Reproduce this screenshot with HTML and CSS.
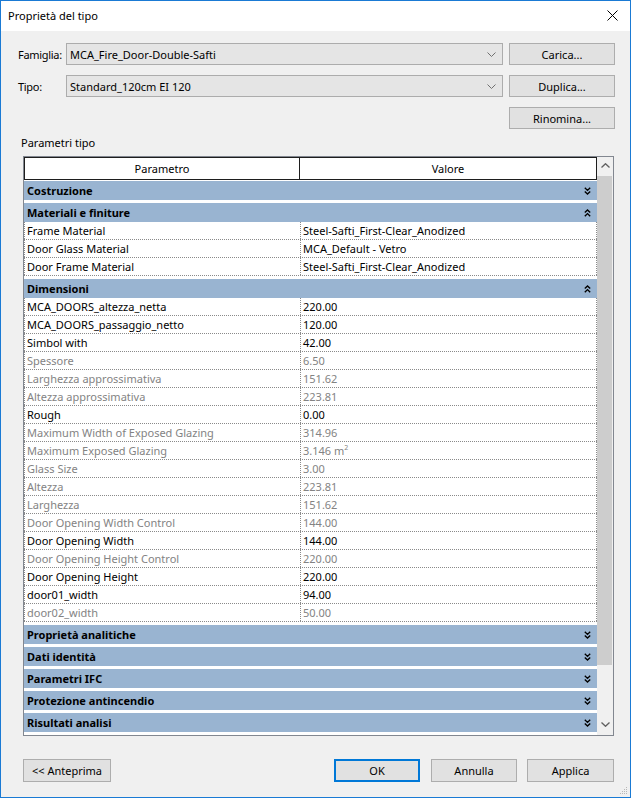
FILE: index.html
```html
<!DOCTYPE html>
<html lang="it">
<head>
<meta charset="utf-8">
<title>Proprietà del tipo</title>
<link rel="stylesheet" href="styles.css">
</head>
<body>
<svg class="defs" width="0" height="0" aria-hidden="true">
  <defs>
    <symbol id="dd" viewBox="0 0 7 8"><path d="M0.8 0.8 L3.5 3.4 L6.2 0.8 M0.8 4.4 L3.5 7 L6.2 4.4" fill="none" stroke="#000" stroke-width="1.4"/></symbol>
    <symbol id="du" viewBox="0 0 7 8"><path d="M0.8 3.6 L3.5 1 L6.2 3.6 M0.8 7.2 L3.5 4.6 L6.2 7.2" fill="none" stroke="#000" stroke-width="1.4"/></symbol>
  </defs>
</svg>
<div class="window">
  <div class="titlebar">
    <span class="title">Proprietà del tipo</span>
    <svg class="close" width="11" height="11" viewBox="0 0 11 11"><path d="M0.5 0.5 L10.5 10.5 M10.5 0.5 L0.5 10.5" stroke="#000" stroke-width="1"/></svg>
  </div>
  <div class="body">
    <div class="top-grid">
      <span class="lbl">Famiglia:</span>
      <div class="combo"><span>MCA_Fire_Door-Double-Safti</span><svg width="9" height="5" viewBox="0 0 9 5"><path d="M0.5 0.5 L4.5 4.5 L8.5 0.5" fill="none" stroke="#707070"/></svg></div>
      <button class="btn">Carica...</button>
      <span class="lbl">Tipo:</span>
      <div class="combo"><span>Standard_120cm EI 120</span><svg width="9" height="5" viewBox="0 0 9 5"><path d="M0.5 0.5 L4.5 4.5 L8.5 0.5" fill="none" stroke="#707070"/></svg></div>
      <button class="btn">Duplica...</button>
      <button class="btn col3">Rinomina...</button>
    </div>
    <div class="group-label">Parametri tipo</div>
    <div class="frame">
      <div class="table">
        <div class="thead"><div class="th th1">Parametro</div><div class="th">Valore</div></div>

        <div class="band first"><span>Costruzione</span><svg class="chev"><use href="#dd"/></svg></div>
        <div class="band"><span>Materiali e finiture</span><svg class="chev"><use href="#du"/></svg></div>
        <div class="row"><div class="c1">Frame Material</div><div class="c2">Steel-Safti_First-Clear_Anodized</div></div>
        <div class="row"><div class="c1">Door Glass Material</div><div class="c2">MCA_Default - Vetro</div></div>
        <div class="row"><div class="c1">Door Frame Material</div><div class="c2">Steel-Safti_First-Clear_Anodized</div></div>

        <div class="band"><span>Dimensioni</span><svg class="chev"><use href="#du"/></svg></div>
        <div class="row"><div class="c1">MCA_DOORS_altezza_netta</div><div class="c2">220.00</div></div>
        <div class="row"><div class="c1">MCA_DOORS_passaggio_netto</div><div class="c2">120.00</div></div>
        <div class="row"><div class="c1">Simbol with</div><div class="c2">42.00</div></div>
        <div class="row ro"><div class="c1">Spessore</div><div class="c2">6.50</div></div>
        <div class="row ro"><div class="c1">Larghezza approssimativa</div><div class="c2">151.62</div></div>
        <div class="row ro"><div class="c1">Altezza approssimativa</div><div class="c2">223.81</div></div>
        <div class="row"><div class="c1">Rough</div><div class="c2">0.00</div></div>
        <div class="row ro"><div class="c1">Maximum Width of Exposed Glazing</div><div class="c2">314.96</div></div>
        <div class="row ro"><div class="c1">Maximum Exposed Glazing</div><div class="c2">3.146 m<sup class="sup">2</sup></div></div>
        <div class="row ro"><div class="c1">Glass Size</div><div class="c2">3.00</div></div>
        <div class="row ro"><div class="c1">Altezza</div><div class="c2">223.81</div></div>
        <div class="row ro"><div class="c1">Larghezza</div><div class="c2">151.62</div></div>
        <div class="row ro"><div class="c1">Door Opening Width Control</div><div class="c2">144.00</div></div>
        <div class="row"><div class="c1">Door Opening Width</div><div class="c2">144.00</div></div>
        <div class="row ro"><div class="c1">Door Opening Height Control</div><div class="c2">220.00</div></div>
        <div class="row"><div class="c1">Door Opening Height</div><div class="c2">220.00</div></div>
        <div class="row"><div class="c1">door01_width</div><div class="c2">94.00</div></div>
        <div class="row ro"><div class="c1">door02_width</div><div class="c2">50.00</div></div>

        <div class="band"><span>Proprietà analitiche</span><svg class="chev"><use href="#dd"/></svg></div>
        <div class="band"><span>Dati identità</span><svg class="chev"><use href="#dd"/></svg></div>
        <div class="band"><span>Parametri IFC</span><svg class="chev"><use href="#dd"/></svg></div>
        <div class="band"><span>Protezione antincendio</span><svg class="chev"><use href="#dd"/></svg></div>
        <div class="band"><span>Risultati analisi</span><svg class="chev"><use href="#dd"/></svg></div>
      </div>
      <div class="scrollbar">
        <div class="arrow"><svg width="9" height="5" viewBox="0 0 9 5"><path d="M0.5 4.5 L4.5 0.7 L8.5 4.5" fill="none" stroke="#606060" stroke-width="1.3"/></svg></div>
        <div class="thumb"></div>
        <div class="spacer"></div>
        <div class="arrow"><svg width="9" height="5" viewBox="0 0 9 5"><path d="M0.5 0.5 L4.5 4.3 L8.5 0.5" fill="none" stroke="#606060" stroke-width="1.3"/></svg></div>
      </div>
    </div>
    <div class="footer">
      <button class="btn fbtn prev">&lt;&lt; Anteprima</button>
      <div class="fspacer"></div>
      <button class="btn fbtn ok">OK</button>
      <button class="btn fbtn">Annulla</button>
      <button class="btn fbtn apply">Applica</button>
    </div>
  </div>
  <svg class="grip" width="8" height="8" viewBox="0 0 8 8"><g fill="#b8b8b8"><rect x="6" y="0" width="1" height="1"/><rect x="4" y="2" width="1" height="1"/><rect x="6" y="2" width="1" height="1"/><rect x="2" y="4" width="1" height="1"/><rect x="4" y="4" width="1" height="1"/><rect x="6" y="4" width="1" height="1"/><rect x="0" y="6" width="1" height="1"/><rect x="2" y="6" width="1" height="1"/><rect x="4" y="6" width="1" height="1"/><rect x="6" y="6" width="1" height="1"/></g></svg>
</div>
</body>
</html>
```

FILE: styles.css
```css
* { box-sizing: border-box; }
html, body { margin: 0; padding: 0; }
body {
  width: 631px;
  height: 798px;
  font-family: "Noto Sans", "Open Sans", sans-serif;
  font-size: 11px;
  color: #000;
  background: #f0f0f0;
}
.defs { position: absolute; width: 0; height: 0; }
.window {
  position: relative;
  width: 631px;
  height: 798px;
  border: 1px solid #1a7ad4;
  background: #f0f0f0;
  display: flex;
  flex-direction: column;
}
.titlebar {
  height: 30px;
  flex: none;
  background: #fff;
  display: flex;
  align-items: center;
  justify-content: space-between;
  padding: 0 12px 2px 7px;
}
.title { font-size: 11px; }
.close { display: block; }
.body {
  padding: 12px 15px 0 17px;
  display: flex;
  flex-direction: column;
}
.top-grid {
  display: grid;
  grid-template-columns: 42px 437px 106px;
  grid-template-rows: 22px 22px 22px;
  column-gap: 6px;
  row-gap: 10px;
}
.lbl { align-self: center; white-space: nowrap; letter-spacing: -0.3px; }
.combo {
  background: #e5e5e5;
  border: 1px solid #acacac;
  display: flex;
  align-items: center;
  justify-content: space-between;
  padding: 0 6px 0 3px;
}
.btn {
  font-family: "Noto Sans", "Open Sans", sans-serif;
  font-size: 11px;
  color: #000;
  background: #e1e1e1;
  border: 1px solid #adadad;
  padding: 0;
  margin: 0;
  height: 22px;
}
.top-grid .btn { width: 106px; }
.col3 { grid-column: 3; }
.group-label {
  margin: 7px 0 0 3px;
  height: 14px;
  line-height: 14px;
}
.frame {
  margin: 6px 0 0 5px;
  width: 591px;
  height: 580px;
  border: 1px solid #828790;
  display: flex;
  background: #fff;
}
.table {
  width: 573px;
  background: #fff;
}
.thead {
  height: 23px;
  border: 1px solid #1e1e1e;
  display: flex;
}
.th {
  flex: 1;
  text-align: center;
  line-height: 21px;
}
.th1 {
  flex: none;
  width: 275px;
  border-right: 1px solid #1e1e1e;
}
.band {
  margin-top: 3px;
  height: 19px;
  background: #99b4d1;
  display: flex;
  align-items: center;
  justify-content: space-between;
  padding: 0 6px 0 3px;
  font-weight: bold;
}
.band.first { margin-top: 1px; }
.chev { width: 7px; height: 8px; display: block; }
.row {
  display: grid;
  grid-template-columns: 277px 296px;
  height: 18px;
  line-height: 17px;
  border-bottom: 1px dotted #8a8a8a;
}
.c1 {
  border-left: 1px dotted #8a8a8a;
  border-right: 1px dotted #8a8a8a;
  padding-left: 2px;
  white-space: nowrap;
  overflow: hidden;
}
.c2 {
  border-right: 1px dotted #8a8a8a;
  padding-left: 2px;
  white-space: nowrap;
  overflow: hidden;
}
.ro { color: #838383; }
.sup { font-size: 7px; vertical-align: 5px; line-height: 0; }
.scrollbar {
  width: 16px;
  background: #f0f0f0;
  display: flex;
  flex-direction: column;
}
.arrow {
  height: 17px;
  display: flex;
  align-items: center;
  justify-content: center;
  flex: none;
}
.thumb {
  margin-top: 2px;
  height: 489px;
  width: 15px;
  background: #cdcdcd;
  flex: none;
}
.spacer { flex: 1; }
.scrollbar .arrow:last-child { margin-bottom: 2px; }
.footer {
  margin-top: 23px;
  display: flex;
  align-items: center;
  height: 23px;
}
.fbtn { height: 23px; width: 86px; }
.prev { margin-left: 5px; width: 88px; }
.fspacer { flex: 1; }
.ok {
  border: 1px solid #0078d7;
  box-shadow: inset 0 0 0 1px #0078d7;
  margin-right: 11px;
}
.apply { margin-left: 10px; width: 87px; margin-right: 1px; }
.grip { position: absolute; right: 2px; bottom: 2px; }
```
